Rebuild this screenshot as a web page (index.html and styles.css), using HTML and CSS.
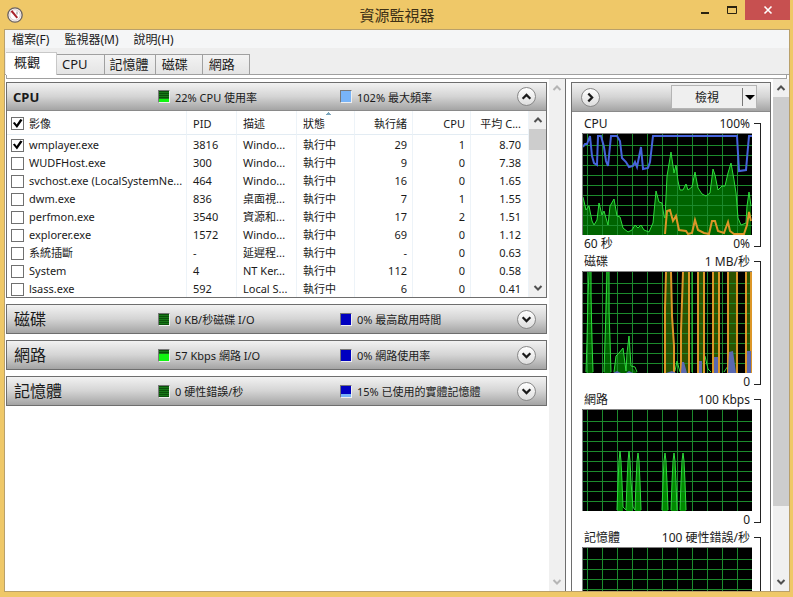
FILE: index.html
```html
<!DOCTYPE html>
<html lang="zh-Hant">
<head>
    <meta charset="UTF-8">
    <meta name="viewport" content="width=device-width, initial-scale=1.0">
    <title>資源監視器</title>
    <link rel="stylesheet" href="styles.css">
</head>
<body>
    <!-- shared shapes -->
    <svg class="defs" width="0" height="0" aria-hidden="true">
        <defs>
            <path id="grid" d="M5.5 0V102M20.5 0V102M35.5 0V102M50.5 0V102M65.5 0V102M80.5 0V102M95.5 0V102M110.5 0V102M125.5 0V102M140.5 0V102M155.5 0V102M0 12.5H170M0 22.5H170M0 32.5H170M0 42.5H170M0 52.5H170M0 62.5H170M0 72.5H170M0 82.5H170M0 92.5H170" stroke="#1c8a2c" fill="none"/>
            <symbol id="up" viewBox="0 0 10 10"><path d="M1.5 7L5 3.5L8.5 7" fill="none" stroke="currentColor" stroke-width="2"/></symbol>
            <symbol id="down" viewBox="0 0 10 10"><path d="M1.5 3L5 6.5L8.5 3" fill="none" stroke="currentColor" stroke-width="2"/></symbol>
            <symbol id="right" viewBox="0 0 10 10"><path d="M3 1.5L6.5 5L3 8.5" fill="none" stroke="currentColor" stroke-width="2"/></symbol>
        </defs>
    </svg>

    <div class="window">
        <div class="titlebar">
            <svg class="app-icon" width="16" height="16" viewBox="0 0 16 16">
                <circle cx="8" cy="8" r="7.2" fill="#f6efee" stroke="#6b6260" stroke-width="1.3"/>
                <circle cx="8" cy="8" r="5.2" fill="#fff" stroke="#d0c4c4" stroke-width="0.8"/>
                <path d="M3.6 4.6L5.4 3.2L11 10.2L9.6 11.4Z" fill="#a8232b"/>
                <path d="M10 4.5V7.5" stroke="#8b8b8b"/>
            </svg>
            <h1 class="title">資源監視器</h1>
            <div class="window-buttons">
                <button class="win-btn" aria-label="最小化"><svg width="10" height="10" viewBox="0 0 10 10"><path d="M1 8H9" stroke="#2b2310" stroke-width="2"/></svg></button>
                <button class="win-btn" aria-label="最大化"><svg width="10" height="10" viewBox="0 0 10 10"><path d="M0.5 1.5V8.5H9.5V1.5" fill="none" stroke="#2b2310"/><path d="M0 2H10" stroke="#2b2310" stroke-width="2"/></svg></button>
                <button class="win-btn close" aria-label="關閉"><svg width="10" height="10" viewBox="0 0 10 10"><path d="M1.5 1.5L8.5 8.5M8.5 1.5L1.5 8.5" stroke="#fff" stroke-width="1.6"/></svg></button>
            </div>
        </div>

        <div class="client">
            <div class="menubar">
                <button class="menu">檔案(F)</button>
                <button class="menu">監視器(M)</button>
                <button class="menu">說明(H)</button>
            </div>
            <div class="tabs">
                <button class="tab active">概觀</button>
                <button class="tab">CPU</button>
                <button class="tab tight">記憶體</button>
                <button class="tab">磁碟</button>
                <button class="tab">網路</button>
            </div>
            <div class="tab-edge"></div>

            <div class="workspace">
                <div class="sections">
                    <div class="section">
                        <div class="bar">
                            <h2 class="bar-title latin">CPU</h2>
                            <div class="stat"><span class="meter green"><i style="height: 3px"></i></span>22% CPU 使用率</div>
                            <div class="stat"><span class="meter blue"><i style="height: 11px"></i></span>102% 最大頻率</div>
                            <button class="round" aria-label="收合"><svg width="11" height="11"><use href="#up"/></svg></button>
                        </div>
                        <div class="list">
                            <table class="processes">
                                <thead>
                                    <tr>
                                        <th class="name"><label><input type="checkbox" class="check" checked>影像</label></th>
                                        <th class="pid">PID</th>
                                        <th class="desc">描述</th>
                                        <th class="col sorted">狀態</th>
                                        <th class="col num">執行緒</th>
                                        <th class="col num">CPU</th>
                                        <th class="col num">平均 C...</th>
                                    </tr>
                                </thead>
                                <tbody>
                                    <tr><td><label><input type="checkbox" class="check" checked>wmplayer.exe</label></td><td>3816</td><td>Windo...</td><td>執行中</td><td class="num">29</td><td class="num">1</td><td class="num">8.70</td></tr>
                                    <tr><td><label><input type="checkbox" class="check">WUDFHost.exe</label></td><td>300</td><td>Windo...</td><td>執行中</td><td class="num">9</td><td class="num">0</td><td class="num">7.38</td></tr>
                                    <tr><td><label><input type="checkbox" class="check">svchost.exe (LocalSystemNe...</label></td><td>464</td><td>Windo...</td><td>執行中</td><td class="num">16</td><td class="num">0</td><td class="num">1.65</td></tr>
                                    <tr><td><label><input type="checkbox" class="check">dwm.exe</label></td><td>836</td><td>桌面視...</td><td>執行中</td><td class="num">7</td><td class="num">1</td><td class="num">1.55</td></tr>
                                    <tr><td><label><input type="checkbox" class="check">perfmon.exe</label></td><td>3540</td><td>資源和...</td><td>執行中</td><td class="num">17</td><td class="num">2</td><td class="num">1.51</td></tr>
                                    <tr><td><label><input type="checkbox" class="check">explorer.exe</label></td><td>1572</td><td>Windo...</td><td>執行中</td><td class="num">69</td><td class="num">0</td><td class="num">1.12</td></tr>
                                    <tr><td><label><input type="checkbox" class="check">系統插斷</label></td><td>-</td><td>延遲程...</td><td>執行中</td><td class="num">-</td><td class="num">0</td><td class="num">0.63</td></tr>
                                    <tr><td><label><input type="checkbox" class="check">System</label></td><td>4</td><td>NT Ker...</td><td>執行中</td><td class="num">112</td><td class="num">0</td><td class="num">0.58</td></tr>
                                    <tr><td><label><input type="checkbox" class="check">lsass.exe</label></td><td>592</td><td>Local S...</td><td>執行中</td><td class="num">6</td><td class="num">0</td><td class="num">0.41</td></tr>
                                </tbody>
                            </table>
                            <div class="scrollbar">
                                <button class="arrow" aria-label="向上"><svg width="10" height="10"><use href="#up"/></svg></button>
                                <div class="track"><div class="thumb" style="height: 14%"></div></div>
                                <button class="arrow" aria-label="向下"><svg width="10" height="10"><use href="#down"/></svg></button>
                            </div>
                        </div>
                    </div>

                    <div class="section">
                        <div class="bar">
                            <h2 class="bar-title">磁碟</h2>
                            <div class="stat"><span class="meter green"></span>0 KB/秒磁碟 I/O</div>
                            <div class="stat"><span class="meter blue"></span>0% 最高啟用時間</div>
                            <button class="round" aria-label="展開"><svg width="11" height="11"><use href="#down"/></svg></button>
                        </div>
                    </div>
                    <div class="section">
                        <div class="bar">
                            <h2 class="bar-title">網路</h2>
                            <div class="stat"><span class="meter green"><i style="height: 7px"></i></span>57 Kbps 網路 I/O</div>
                            <div class="stat"><span class="meter blue"></span>0% 網路使用率</div>
                            <button class="round" aria-label="展開"><svg width="11" height="11"><use href="#down"/></svg></button>
                        </div>
                    </div>
                    <div class="section">
                        <div class="bar">
                            <h2 class="bar-title">記憶體</h2>
                            <div class="stat"><span class="meter green"></span>0 硬性錯誤/秒</div>
                            <div class="stat"><span class="meter blue"><i style="height: 3px"></i></span>15% 已使用的實體記憶體</div>
                            <button class="round" aria-label="展開"><svg width="11" height="11"><use href="#down"/></svg></button>
                        </div>
                    </div>
                </div>

                <div class="scrollbar disabled">
                    <button class="arrow" aria-label="向上" disabled><svg width="10" height="10"><use href="#up"/></svg></button>
                    <div class="track"></div>
                    <button class="arrow" aria-label="向下" disabled><svg width="10" height="10"><use href="#down"/></svg></button>
                </div>
                <div class="splitter"></div>

                <div class="graphs">
                    <div class="graphs-bar">
                        <button class="round" aria-label="隱藏圖表"><svg width="11" height="11"><use href="#right"/></svg></button>
                        <button class="view"><span class="view-text">檢視</span><span class="view-arrow"></span></button>
                    </div>

                    <div class="graph">
                        <div class="graph-main">
                            <div class="caption"><span>CPU</span><span>100%</span></div>
                            <svg class="plot" viewBox="0 0 170 102">
                                <rect width="170" height="102" fill="#000"/>
                                <path d="M1 102V64L4 77L7 73L10 88L12 92L15 87L17 70L20 82L22 78L26 92L28 73L32 66L35 83L38 84L41 95L46 99L50 97L53 92L56 95L59 92L62 97L67 99L71 90L74 58L77 69L80 70L82 83L83 85L85 43L89 19L92 40L94 32L96 48L98 57L101 57L104 51L106 57L110 54L113 39L116 55L120 61L124 63L128 60L131 36L133 42L136 57L140 53L143 53L146 40L149 30L152 47L154 60L156 85L159 92L164 90L165 73L167 59L169 73V102Z" fill="#006400"/>
                                <use href="#grid"/>
                                <path class="line-green" d="M1 64L4 77L7 73L10 88L12 92L15 87L17 70L20 82L22 78L26 92L28 73L32 66L35 83L38 84L41 95L46 99L50 97L53 92L56 95L59 92L62 97L67 99L71 90L74 58L77 69L80 70L82 83L83 85L85 43L89 19L92 40L94 32L96 48L98 57L101 57L104 51L106 57L110 54L113 39L116 55L120 61L124 63L128 60L131 36L133 42L136 57L140 53L143 53L146 40L149 30L152 47L154 60L156 85L159 92L164 90L165 73L167 59L169 73"/>
                                <path class="line-orange" d="M83 101L85 78L88 77L91 88L94 83L97 97L104 98L106 101L110 100L113 87L116 97L122 100L127 101L130 88L133 88L136 98L142 100L146 89L148 98L152 101L162 101L165 92L167 79L169 88"/>
                                <path class="line-blue" d="M1 14L3 11L5 11L8 3L10 23L12 30L15 32L16 3L19 3L22 14L24 28L26 33L29 3L35 3L38 8L40 25L44 29L47 34L51 33L53 29L55 34L59 14L61 36L66 35L68 29L71 3L155 3L157 38L164 37L167 3L170 3"/>
                                <path class="frame" d="M0.5 102V0.5H170"/>
                            </svg>
                            <div class="caption"><span>60 秒</span><span>0%</span></div>
                        </div>
                        <div class="bracket"></div>
                    </div>

                    <div class="graph">
                        <div class="graph-main">
                            <div class="caption"><span>磁碟</span><span>1 MB/秒</span></div>
                            <svg class="plot" viewBox="0 0 170 102">
                                <rect width="170" height="102" fill="#000"/>
                                <path d="M4 102L7 1H9L11 102ZM22 102L24 1H27L29 102ZM32 102L34 85L37 82L41 77L44 100L47 65L49 95L55 102Z" fill="#006400"/>
                                <path d="M83 102V37L84 1H89L92 75L93 102ZM99 102L101 1H107V102ZM116 1H122V102H116ZM131 1H137V102H131ZM146 1H155V102H146ZM164 1H169V102H164Z" fill="#2c5200"/>
                                <use href="#grid"/>
                                <path class="line-green" d="M4 101L5 70L6 25L7 1M9 1L9 25L10 70L11 101M22 101L24 40L25 1M27 1L27 40L29 101M32 101L34 85L37 82L41 77L44 100L45 82L47 65L49 95L53 96L55 101M93 100L95 90L98 101M110 1V101M123 85L126 98L129 101M142 101L146 95"/>
                                <path class="line-orange" d="M83 102V37L84 1M89 1L90 45L92 75L92 102M99 102V60L101 1M107 1V102M116 1V102M122 1V102M131 1V102M137 1V102M146 1V102M155 1V102M164 1V102M169 1V102"/>
                                <path d="M31 102L35 100L39 102ZM44 102L47 100L51 102ZM84 102L90 100L94 102ZM99 102L100 91H102L105 102ZM117 102V90H120V102ZM132 102V86H136V102ZM146 102L147 81L151 80L154 102ZM165 102V80H169V102Z" fill="#5a68b0"/>
                                <path class="frame" d="M0.5 102V0.5H170"/>
                            </svg>
                            <div class="caption"><span></span><span>0</span></div>
                        </div>
                        <div class="bracket"></div>
                    </div>

                    <div class="graph">
                        <div class="graph-main">
                            <div class="caption"><span>網路</span><span>100 Kbps</span></div>
                            <svg class="plot" viewBox="0 0 170 102">
                                <rect width="170" height="102" fill="#000"/>
                                <path d="M35 102L36 73L38 42L40 73L41 102ZM44 102L45 73L47 42L49 73L51 102ZM53 102L54 73L56 44L58 73L59 102ZM80 102L81 73L83 44L85 73L86 102ZM89 102L90 73L92 44L94 73L95 102ZM98 102L99 73L101 44L103 73L104 102Z" fill="#008a00"/>
                                <use href="#grid"/>
                                <path class="line-green" d="M35 101L36 73L37 52L38 42L39 52L40 73L41 98L44 101L45 73L46 52L47 42L48 52L49 73L51 98L53 101L54 73L55 52L56 44L57 52L58 73L59 101M80 101L81 73L82 52L83 44L84 52L85 73L86 101M89 101L90 73L91 52L92 44L93 52L94 73L95 101M98 101L99 73L100 52L101 44L102 52L103 73L104 101"/>
                                <path class="frame" d="M0.5 102V0.5H170"/>
                            </svg>
                            <div class="caption"><span></span><span>0</span></div>
                        </div>
                        <div class="bracket"></div>
                    </div>

                    <div class="graph">
                        <div class="graph-main">
                            <div class="caption"><span>記憶體</span><span>100 硬性錯誤/秒</span></div>
                            <svg class="plot" viewBox="0 0 170 102">
                                <rect width="170" height="102" fill="#000"/>
                                <use href="#grid"/>
                                <path class="frame" d="M0.5 102V0.5H170"/>
                            </svg>
                        </div>
                        <div class="bracket"></div>
                    </div>
                </div>

                <div class="scrollbar">
                    <button class="arrow" aria-label="向上"><svg width="10" height="10"><use href="#up"/></svg></button>
                    <div class="track"><div class="thumb" style="height: 86%"></div></div>
                    <button class="arrow" aria-label="向下"><svg width="10" height="10"><use href="#down"/></svg></button>
                </div>
            </div>
        </div>
    </div>
</body>
</html>
```

FILE: styles.css
```css
* {
    box-sizing: border-box;
}
body {
    margin: 0;
    font-family: "Noto Sans", "Noto Sans CJK TC", sans-serif;
    font-size: 11px;
    color: #1a1a1a;
    background-color: #efc868;
}
button {
    font-family: inherit;
    color: inherit;
    border: none;
    padding: 0;
    background: none;
}
h1, h2 {
    margin: 0;
    font-weight: normal;
}
.defs {
    position: absolute;
}
.window {
    height: 100vh;
    display: flex;
    flex-direction: column;
    padding: 0 3px 5px 4px;
    overflow: hidden;
}

/* title bar */
.titlebar {
    height: 29px;
    flex: none;
    display: grid;
    grid-template-columns: 1fr auto 1fr;
    align-items: center;
}
.app-icon {
    margin-left: 3px;
}
.title {
    font-size: 15px;
    line-height: 28px;
    color: #3d3015;
}
.window-buttons {
    display: flex;
    justify-content: flex-end;
    align-self: start;
}
.win-btn {
    width: 27px;
    height: 20px;
    display: flex;
    align-items: center;
    justify-content: center;
}
.win-btn.close {
    width: 45px;
    background-color: #c75050;
}

/* menu and tabs */
.client {
    flex: 1;
    min-height: 0;
    display: flex;
    flex-direction: column;
    border: 1px solid #b9a06a;
    background-color: #fff;
}
.menubar {
    display: flex;
    gap: 15px;
    height: 18px;
    flex: none;
    padding-left: 7px;
    background-color: #f5f6f7;
}
.menu {
    font-size: 12px;
    line-height: 20px;
}
.tabs {
    display: flex;
    align-items: flex-end;
    height: 27px;
    flex: none;
    padding-left: 1px;
    background-color: #eee;
    border-bottom: 1px solid #a0a0a0;
}
.tab {
    height: 20px;
    padding: 0 16px 2px 5px;
    font-size: 13px;
    line-height: 18px;
    border: 1px solid #a0a0a0;
    border-bottom: none;
    border-left: none;
    background: linear-gradient(#f3f3f3, #e4e4e4);
}
.tab:nth-child(n+3) {
    padding: 0 14px 2px 6px;
}
.tab.tight {
    padding: 0 6px 2px 5px;
}
.tab.active {
    height: 23px;
    margin-bottom: -1px;
    padding: 0 16px 4px 8px;
    border-right-color: #c8c8c8;
    border-top-color: #c8c8c8;
    background: #fff;
}
.tab-edge {
    height: 4px;
    flex: none;
    margin: 0 2px 0 1px;
    border: 1px solid #a0a0a0;
    border-top: none;
    background-color: #fff;
}

/* main area */
.workspace {
    flex: 1;
    min-height: 0;
    display: flex;
}
.sections {
    flex: 1;
    display: flex;
    flex-direction: column;
    gap: 6px;
    padding: 3px 2px 0 1px;
    min-width: 0;
}
.section {
    border: 1px solid #6e6e6e;
    background-color: #fff;
}
.bar {
    display: grid;
    grid-template-columns: 151px 182px 1fr auto;
    align-items: center;
    height: 28px;
    padding-right: 10px;
    background: linear-gradient(#f2f2f2, #d4d4d4 50%, #a4a4a4);
}
.section:first-child .bar {
    border-bottom: 1px solid #8a8a8a;
}
.bar-title {
    padding-left: 7px;
    font-size: 16px;
    line-height: 24px;
}
.bar-title.latin {
    padding-left: 6px;
    font-size: 13px;
    font-weight: bold;
}
.stat {
    display: flex;
    align-items: center;
    gap: 5px;
    white-space: nowrap;
}
.meter {
    width: 12px;
    height: 13px;
    display: flex;
    align-items: flex-end;
    border: 1px solid #eee;
    border-top-color: #777;
    border-left-color: #777;
}
.meter i {
    flex: 1;
}
.meter.green {
    background: repeating-linear-gradient(#0a500a 0 1px, #187818 1px 2px);
}
.meter.green i {
    background-color: #10f510;
}
.meter.blue {
    background-color: #0000c0;
}
.meter.blue i {
    background-color: #78b4f8;
}
.round {
    width: 19px;
    height: 19px;
    display: flex;
    align-items: center;
    justify-content: center;
    border: 1px solid #888;
    border-radius: 50%;
    background: linear-gradient(#fff, #ddd);
}

/* process list */
.list {
    display: flex;
}
.list .scrollbar {
    width: 17px;
}
.processes {
    flex: 1;
    width: 100%;
    min-width: 0;
    table-layout: fixed;
    border-collapse: separate;
    border-spacing: 0;
}
.processes th, .processes td {
    height: 18px;
    padding: 2px 5px 0 6px;
    font-weight: normal;
    line-height: 16px;
    text-align: left;
    white-space: nowrap;
    overflow: hidden;
    border-right: 1px solid #edf3f8;
}
.processes th {
    height: 24px;
    border-bottom: 1px solid #e3ecf3;
}
.processes th:first-child, .processes td:first-child {
    padding: 2px 0 0 4px;
}
.processes .num {
    text-align: right;
}
.processes th:last-child, .processes td:last-child {
    padding-right: 7px;
}
.pid {
    width: 50px;
}
.desc {
    width: 60px;
}
.col {
    width: 58px;
}
.sorted {
    background: conic-gradient(from 135deg at 50% 0, #7aa5bd 90deg, transparent 0) 28px 1px / 6px 3px no-repeat;
}
.processes label {
    display: flex;
    align-items: center;
    gap: 5px;
}
.check {
    appearance: none;
    width: 13px;
    height: 13px;
    flex: none;
    margin: 0;
    border: 1px solid #707070;
    background-color: #fff;
}
.check:checked::before {
    content: "";
    display: block;
    height: 11px;
    background-color: #000;
    clip-path: polygon(8% 45%, 25% 36%, 42% 58%, 76% 10%, 96% 18%, 45% 92%);
}

/* scrollbars */
.scrollbar {
    width: 16px;
    flex: none;
    display: flex;
    flex-direction: column;
    background-color: #f0f0f0;
}
.arrow {
    height: 18px;
    display: flex;
    align-items: center;
    justify-content: center;
    color: #505050;
}
.track {
    flex: 1;
}
.thumb {
    background-color: #cdcdcd;
}
.disabled .arrow {
    color: #b5b5b5;
}
.splitter {
    width: 6px;
    flex: none;
    border-left: 1px solid #6e6e6e;
}

/* graphs */
.graphs {
    width: 200px;
    flex: none;
    margin: 3px 2px 0 0;
    border: 1px solid #6e6e6e;
    border-bottom: none;
    overflow: hidden;
}
.graphs-bar {
    display: flex;
    align-items: center;
    justify-content: space-between;
    height: 29px;
    margin-bottom: 3px;
    padding: 0 13px 0 9px;
    border-bottom: 1px solid #8a8a8a;
    background: linear-gradient(#f2f2f2, #d4d4d4 50%, #a4a4a4);
}
.view {
    display: flex;
    align-items: center;
    width: 86px;
    height: 24px;
    font-size: 12px;
    border: 1px solid #b4b4b4;
    background-color: #efefef;
}
.view-text {
    flex: 1;
}
.view-arrow {
    width: 14px;
    height: 18px;
    display: flex;
    align-items: center;
    justify-content: center;
    border-left: 1px solid #777;
}
.view-arrow::before {
    content: "";
    border: 5px solid transparent;
    border-top-color: #000;
    border-bottom: none;
}
.graph {
    display: flex;
    padding: 0 9px 0 10px;
}
.graph-main {
    flex: 1;
}
.caption {
    display: flex;
    justify-content: space-between;
    height: 18px;
    padding: 0 2px;
    font-size: 12px;
    line-height: 18px;
}
.plot {
    display: block;
    width: 100%;
}
.bracket {
    width: 7px;
    margin: 8px 0 6px 2px;
    border: 1px solid #222;
    border-left: none;
}
.line-green, .line-orange, .line-blue, .frame {
    fill: none;
}
.line-green {
    stroke: #2fdc3c;
}
.line-orange {
    stroke: #dc9628;
    stroke-width: 2;
}
.line-blue {
    stroke: #4664dc;
    stroke-width: 2;
}
.frame {
    stroke: #808080;
}
```
